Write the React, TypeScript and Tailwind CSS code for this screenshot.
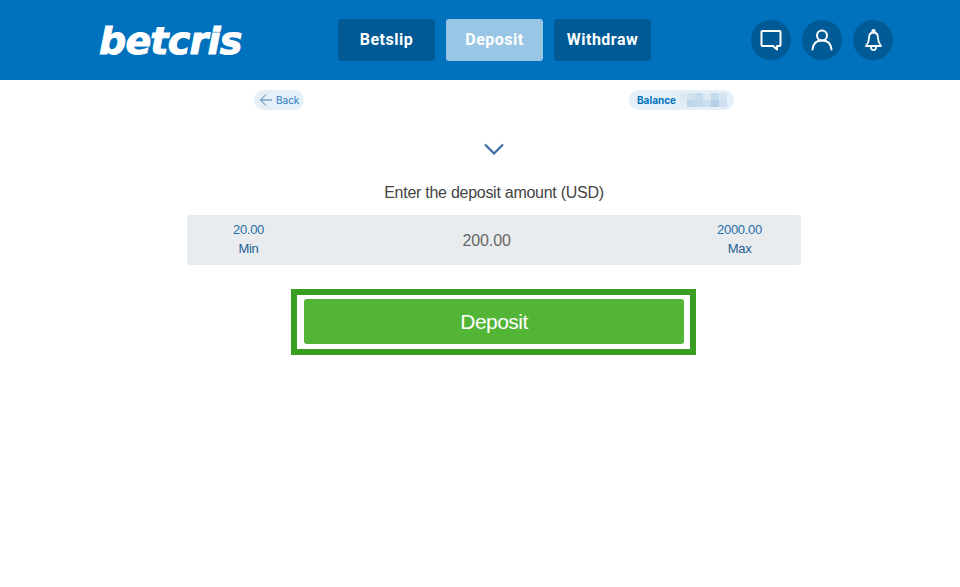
const navBase =
  "flex h-[42px] w-[97px] items-center justify-center rounded-[3px] font-['Roboto',sans-serif] text-[16px] font-bold tracking-[0.5px] text-white";

const blurCells = [
  "bg-[#dbe9f4]", "bg-[#d3e4f1]", "bg-[#c6dcee]", "bg-[#dbe9f4]", "bg-[#c4dbec]", "bg-[#d5e5f2]",
  "bg-[#e0ecf6]", "bg-[#bdd6ea]", "bg-[#c3daec]", "bg-[#c9deee]", "bg-[#b5d0e7]", "bg-[#cfe1f0]",
];

function ChatIcon() {
  return (
    <svg width="22" height="22" viewBox="0 0 22 22" fill="none" stroke="white" strokeWidth="2" strokeLinejoin="round">
      <path d="M2.5 2h17a1 1 0 0 1 1 1v13a1 1 0 0 1-1 1h-2.5v3.5L13 17H2.500a1 1 0 0 1-1-1V3a1 1 0 0 1 1-1z" />
    </svg>
  );
}

function UserIcon() {
  return (
    <svg width="22" height="22" viewBox="0 0 22 22" fill="none" stroke="white" strokeWidth="2" strokeLinecap="round">
      <circle cx="11" cy="6.5" r="5" />
      <path d="M1.5 20.5c.5-5.500 4-9 9.500-9s9 3.500 9.500 9" />
    </svg>
  );
}

function BellIcon() {
  return (
    <svg width="17" height="23" viewBox="0 0 17 23" fill="none" stroke="white" strokeWidth="1.800" strokeLinejoin="round">
      <path d="M8.500 3.500c3 0 4.500 2.500 4.500 5.500 0 3.500 1 5.500 3 8h-15c2-2.500 3-4.500 3-8 0-3 1.500-5.500 4.500-5.500z" />
      <circle cx="8.500" cy="2.200" r="1.300" />
      <path d="M6 17.500c0 2.500 1 3.700 2.500 3.700s2.500-1.200 2.500-3.700" />
    </svg>
  );
}

export default function App() {
  return (
    <div className="min-h-[587px] bg-white font-['Liberation_Sans',sans-serif]">
      {/* Header */}
      <header className="flex h-20 items-center bg-[#0071bc] pl-[99px]">
        <div className="w-[239px] pt-[1px] font-['DejaVu_Sans',sans-serif] text-[38px] leading-none font-bold tracking-[-0.8px] text-white italic [-webkit-text-stroke:1px_white]">
          betcris
        </div>
        <nav className="flex gap-[11px]">
          <button className={`${navBase} bg-[#005a96]`}>Betslip</button>
          <button className={`${navBase} bg-[#99c6e4]`}>Deposit</button>
          <button className={`${navBase} bg-[#005a96]`}>Withdraw</button>
        </nav>
        <div className="ml-[100px] flex gap-[11px]">
          <button className="flex h-10 w-10 items-center justify-center rounded-full bg-[#005a96]">
            <ChatIcon />
          </button>
          <button className="flex h-10 w-10 items-center justify-center rounded-full bg-[#005a96]">
            <UserIcon />
          </button>
          <button className="flex h-10 w-10 items-center justify-center rounded-full bg-[#005a96]">
            <BellIcon />
          </button>
        </div>
      </header>

      {/* Back and balance */}
      <div className="mt-[10px] flex items-center pl-[254px]">
        <div className="flex h-5 w-[50px] items-center gap-[3px] rounded-full bg-[#e4eff8] pl-[5px] font-['Inter',sans-serif] text-[10px] text-[#2b7cc0]">
          <svg width="14" height="14" viewBox="0 0 14 14" fill="none" stroke="#4a7fb5" strokeWidth="1">
            <path d="M13 7H1.500M7 1.500 1.500 7 7 12.500" />
          </svg>
          Back
        </div>
        <div className="ml-[325px] flex h-5 w-[105px] items-center gap-[3px] rounded-full bg-[#e4eff8] pl-2 font-['Inter',sans-serif] text-[10px] font-bold text-[#0071bc]">
          Balance
          <div className="grid w-[48px] grid-cols-6">
            {blurCells.map((cell, i) => (
              <span key={i} className={`h-[7px] ${cell}`} />
            ))}
          </div>
        </div>
      </div>

      {/* Deposit form */}
      <div className="ml-[187px] flex w-[614px] flex-col items-center">
        <svg className="mt-[33px]" width="20" height="12" viewBox="0 0 20 12" fill="none" stroke="#3a6ea5" strokeWidth="2.200">
          <path d="M1 1.500 10 10.500 19 1.500" />
        </svg>
        <p className="mt-[28px] text-[16px] leading-5 tracking-[-0.27px] text-[#444]">Enter the deposit amount (USD)</p>
        <div className="mt-[12px] flex h-[50px] w-full items-center justify-between rounded-[3px] bg-[#e9ecef] pr-[39px] pl-[46px]">
          <div className="mb-[2px] flex flex-col items-center text-[13px] leading-[19px] tracking-[-0.3px] text-[#1f6fa8]">
            <span>20.00</span>
            <span className="text-[#1d5f91]">Min</span>
          </div>
          <span className="mt-[2px] mr-[8px] text-[16px] tracking-[-0.1px] text-[#666]">200.00</span>
          <div className="mb-[2px] flex flex-col items-center text-[13px] leading-[19px] tracking-[-0.3px] text-[#1f6fa8]">
            <span>2000.00</span>
            <span className="text-[#1d5f91]">Max</span>
          </div>
        </div>
        <div className="mt-[24px] ml-[104px] h-[66px] w-[405px] self-start border-[6px] border-[#3a9e22] pt-1 pr-[6px] pl-[7px]">
          <button className="flex h-[45px] w-full items-center justify-center rounded-[3px] bg-[#52b535] text-[21px] tracking-[-0.55px] text-white">
            Deposit
          </button>
        </div>
      </div>
    </div>
  );
}
